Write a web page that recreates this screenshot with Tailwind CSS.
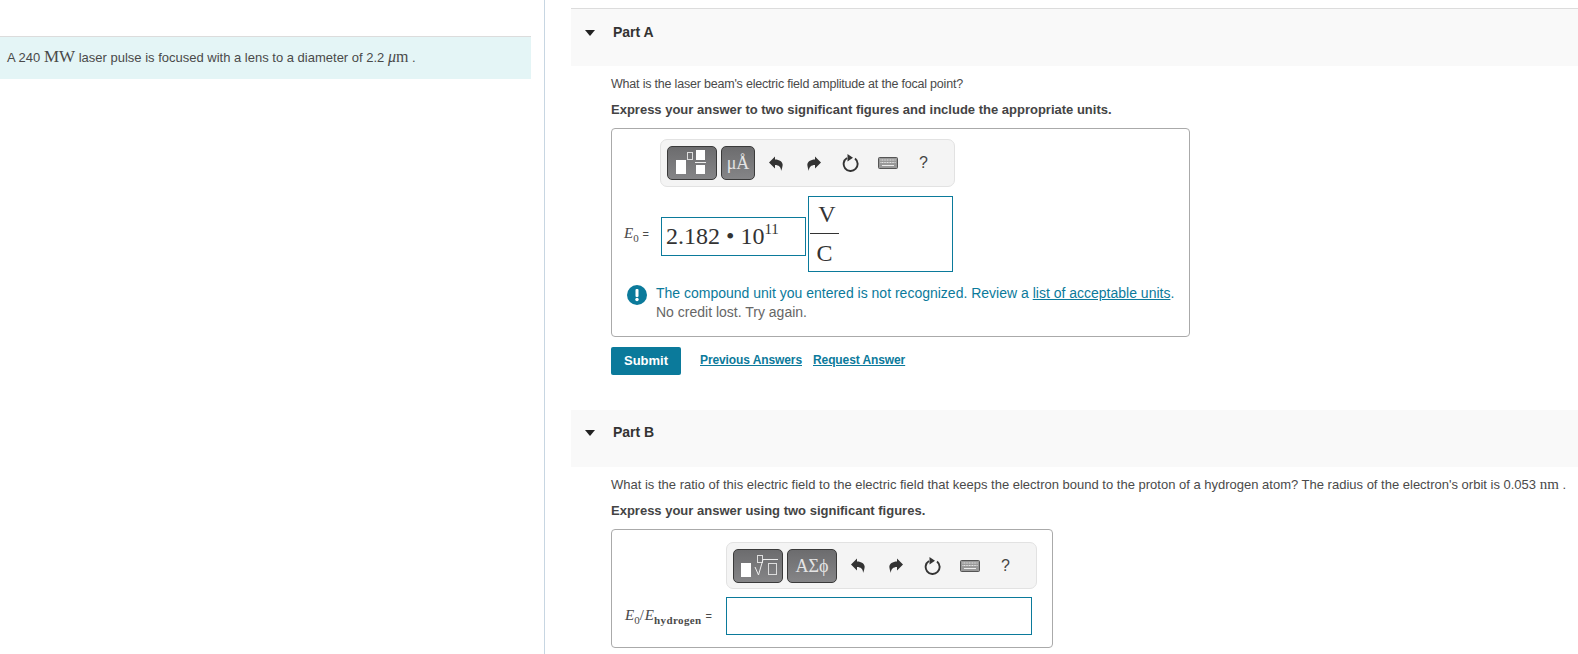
<!DOCTYPE html>
<html lang="en">
<head>
  <meta charset="UTF-8"/>
  <title>Part A and Part B</title>
  <script src="https://cdn.jsdelivr.net/npm/@tailwindcss/browser@4"></script>
</head>
<body class="bg-white font-['Liberation_Sans',sans-serif] text-[#4a4a4a] text-[12px] overflow-hidden">

  <!-- shared toolbar icons -->
  <svg class="hidden">
    <symbol id="undo" viewBox="0 0 14 15"><path fill="#333" d="M0 6.500 6 .5v3C11 3.500 14.500 6.500 13.500 10 13.200 12 12.500 14 12 15 12.300 11.500 10 9 6 9v3.500z"/></symbol>
    <symbol id="redo" viewBox="0 0 14 15"><path fill="#333" d="M14 6.500 8 .5v3C3 3.500-.5 6.500.5 10 .8 12 1.500 14 2 15 1.700 11.500 4 9 8 9v3.500z"/></symbol>
    <symbol id="reset" viewBox="0 0 18 18"><path fill="none" stroke="#333" stroke-width="1.900" d="M6 4a7 7 0 1 0 8 .5"/><path fill="#333" d="M6.500 0 12 3.700 6.500 7.500z"/></symbol>
    <symbol id="keys" viewBox="0 0 20 12"><rect x=".5" y=".5" width="19" height="11" rx="1" fill="#999" stroke="#555"/><path stroke="#eee" stroke-dasharray="1 .6" d="M2.500 3h15M2.500 5.500h15"/><path stroke="#eee" d="M4 8.500h12"/></symbol>
  </svg>

  <div class="flex h-[654px]">
    <!-- left panel -->
    <div class="w-[531px] shrink-0 pt-[36px]">
      <div class="h-[43px] border-t border-[#dcdcdc] bg-[#e4f5f6] pl-[7px] pb-[2px] flex items-center text-[13px]">
        <span>A 240 <span class="font-['Liberation_Serif',serif] text-[17px]">MW</span> laser pulse is focused with a lens to a diameter of 2.2 <span class="font-['Liberation_Serif',serif] text-[16px]"><i>μ</i>m</span> .</span>
      </div>
    </div>
    <div class="ml-[13px] w-px bg-[#c7d6e2] shrink-0"></div>

    <!-- right panel -->
    <div class="ml-[26px] flex-1 min-w-0 pt-[8px]">
      <div class="h-[58px] border-t border-[#dcdcdc] bg-[#f9f9f9] flex items-start pt-[16px] pl-[14px] gap-[18px]">
        <span class="mt-[5px] w-0 h-0 border-x-[5.500px] border-x-transparent border-t-[6px] border-t-[#222]"></span>
        <span class="font-bold text-[14px] text-[#333] leading-[14px]">Part A</span>
      </div>

      <div class="pl-[40px]">
        <p class="mt-[11px] text-[12.500px] tracking-[-0.2px] leading-[14px] whitespace-nowrap">What is the laser beam's electric field amplitude at the focal point?</p>
        <p class="mt-[11px] text-[13px] leading-[15px] font-bold text-[#444] whitespace-nowrap">Express your answer to two significant figures and include the appropriate units.</p>

        <div class="mt-[11px] w-[579px] h-[209px] border border-[#aaa] rounded-[4px] pt-[10px]">
          <div class="ml-[48px] w-[295px] h-[48px] bg-[#f4f4f4] border border-[#e2e2e2] rounded-[7px] flex items-center pl-[6px]">
            <div class="w-[50px] h-[34px] rounded-[5px] border border-[#3a3a3a] bg-linear-to-b from-[#6c6c6e] to-[#858587]">
              <svg width="48" height="32" viewBox="0 0 48 32"><rect x="8" y="13" width="10" height="14" fill="#fff"/><rect x="19.500" y="5.500" width="5" height="7" fill="none" stroke="#ddd"/><rect x="28" y="3" width="9" height="10" fill="#fff"/><rect x="27" y="15" width="11" height="1" fill="#eee"/><rect x="28" y="18" width="9" height="9" fill="#fff"/></svg>
            </div>
            <div class="ml-[4px] w-[34px] h-[34px] rounded-[5px] border border-[#3a3a3a] bg-linear-to-b from-[#6c6c6e] to-[#858587] flex items-center justify-center font-['Liberation_Serif',serif] text-[#e4e4e4] text-[18px] leading-none">μÅ</div>
            <svg class="ml-[14px]" width="14" height="15"><use href="#undo"/></svg>
            <svg class="ml-[24px]" width="14" height="15"><use href="#redo"/></svg>
            <svg class="ml-[20px]" width="18" height="18"><use href="#reset"/></svg>
            <svg class="ml-[19px]" width="20" height="12"><use href="#keys"/></svg>
            <span class="ml-[21px] text-[16px] text-[#444]">?</span>
          </div>

          <div class="mt-[9px] flex items-center">
            <span class="ml-[12px] w-[37px] font-['Liberation_Serif',serif] text-[15px] whitespace-nowrap"><i>E</i><span class="text-[11px] align-sub">0</span> <span class="font-['Liberation_Sans',sans-serif] text-[11px]">=</span></span>
            <div class="mt-[4px] w-[145px] h-[39px] border border-[#0b7a9b] pl-[4px] flex items-center font-['Liberation_Serif',serif] text-[24px] text-[#333] whitespace-nowrap">2.182 • 10<span class="text-[15px] -mt-[14px]">11</span></div>
            <div class="ml-[2px] w-[145px] h-[76px] border border-[#0b7a9b] pl-[1px] font-['Liberation_Serif',serif] text-[24px] text-[#333]">
              <div class="w-[29px] h-[37px] border-b border-[#333] text-center pl-[5px] leading-[34px]">V</div>
              <div class="w-[29px] text-center leading-[38px]">C</div>
            </div>
          </div>

          <div class="mt-[12px] ml-[15px] flex items-start gap-[9px]">
            <svg class="shrink-0 mt-[1px]" width="20" height="20" viewBox="0 0 20 20"><circle cx="10" cy="10" r="10" fill="#0b7a9b"/><rect x="8.500" y="4" width="3" height="8" rx="1" fill="#fff"/><circle cx="10" cy="14.500" r="1.700" fill="#fff"/></svg>
            <div class="text-[14px] leading-[19px] whitespace-nowrap">
              <div class="text-[#0b7a9b]">The compound unit you entered is not recognized. Review a <span class="underline">list of acceptable units</span>.</div>
              <div class="text-[#666]">No credit lost. Try again.</div>
            </div>
          </div>
        </div>

        <div class="mt-[10px] flex items-center">
          <div class="w-[70px] h-[28px] rounded-[2px] bg-[#0b7a9b] text-white font-bold text-[13px] flex items-center justify-center">Submit</div>
          <span class="ml-[19px] mb-[2px] font-bold text-[#0b7a9b] underline tracking-[-0.1px]">Previous Answers</span>
          <span class="ml-[11px] mb-[2px] font-bold text-[#0b7a9b] underline tracking-[-0.1px]">Request Answer</span>
        </div>
      </div>

      <div class="mt-[35px] h-[57px] bg-[#f9f9f9] flex items-start pt-[15px] pl-[14px] gap-[18px]">
        <span class="mt-[5px] w-0 h-0 border-x-[5.500px] border-x-transparent border-t-[6px] border-t-[#222]"></span>
        <span class="font-bold text-[14px] text-[#333] leading-[14px]">Part B</span>
      </div>

      <div class="pl-[40px]">
        <p class="mt-[10px] text-[13px] leading-[14px] whitespace-nowrap">What is the ratio of this electric field to the electric field that keeps the electron bound to the proton of a hydrogen atom? The radius of the electron's orbit is 0.053 <span class="font-['Liberation_Serif',serif] text-[15px]">nm</span> .</p>
        <p class="mt-[12px] text-[13px] leading-[14px] font-bold text-[#444] whitespace-nowrap">Express your answer using two significant figures.</p>

        <div class="mt-[11px] w-[442px] h-[119px] border border-[#aaa] rounded-[4px] pt-[12px]">
          <div class="ml-[114px] w-[311px] h-[47px] bg-[#f4f4f4] border border-[#e2e2e2] rounded-[7px] flex items-center pl-[6px]">
            <div class="w-[50px] h-[34px] rounded-[5px] border border-[#3a3a3a] bg-linear-to-b from-[#6c6c6e] to-[#858587]">
              <svg width="48" height="32" viewBox="0 0 48 32"><rect x="7" y="13" width="10" height="14" fill="#fff"/><rect x="23.500" y="5.500" width="5" height="7" fill="none" stroke="#ddd"/><path d="M21 17l3.500 8L29 9.500h15" fill="none" stroke="#eee"/><rect x="34.500" y="13.500" width="8" height="11" fill="none" stroke="#ddd"/></svg>
            </div>
            <div class="ml-[4px] w-[50px] h-[34px] rounded-[5px] border border-[#3a3a3a] bg-linear-to-b from-[#6c6c6e] to-[#858587] flex items-center justify-center font-['Liberation_Serif',serif] text-[#e4e4e4] text-[18px] leading-none">ΑΣϕ</div>
            <svg class="ml-[14px]" width="14" height="15"><use href="#undo"/></svg>
            <svg class="ml-[24px]" width="14" height="15"><use href="#redo"/></svg>
            <svg class="ml-[20px]" width="18" height="18"><use href="#reset"/></svg>
            <svg class="ml-[19px]" width="20" height="12"><use href="#keys"/></svg>
            <span class="ml-[21px] text-[16px] text-[#444]">?</span>
          </div>

          <div class="mt-[8px] flex items-center">
            <span class="ml-[13px] w-[101px] font-['Liberation_Serif',serif] text-[15px] whitespace-nowrap"><i>E</i><span class="text-[11px] align-sub">0</span>/<span class="ml-[1px]"><i>E</i></span><span class="text-[11px] font-bold align-sub tracking-[0.4px]">hydrogen</span> <span class="font-['Liberation_Sans',sans-serif] text-[11px]">=</span></span>
            <div class="w-[306px] h-[38px] border border-[#0b7a9b]"></div>
          </div>
        </div>
      </div>
    </div>
  </div>
</body>
</html>
